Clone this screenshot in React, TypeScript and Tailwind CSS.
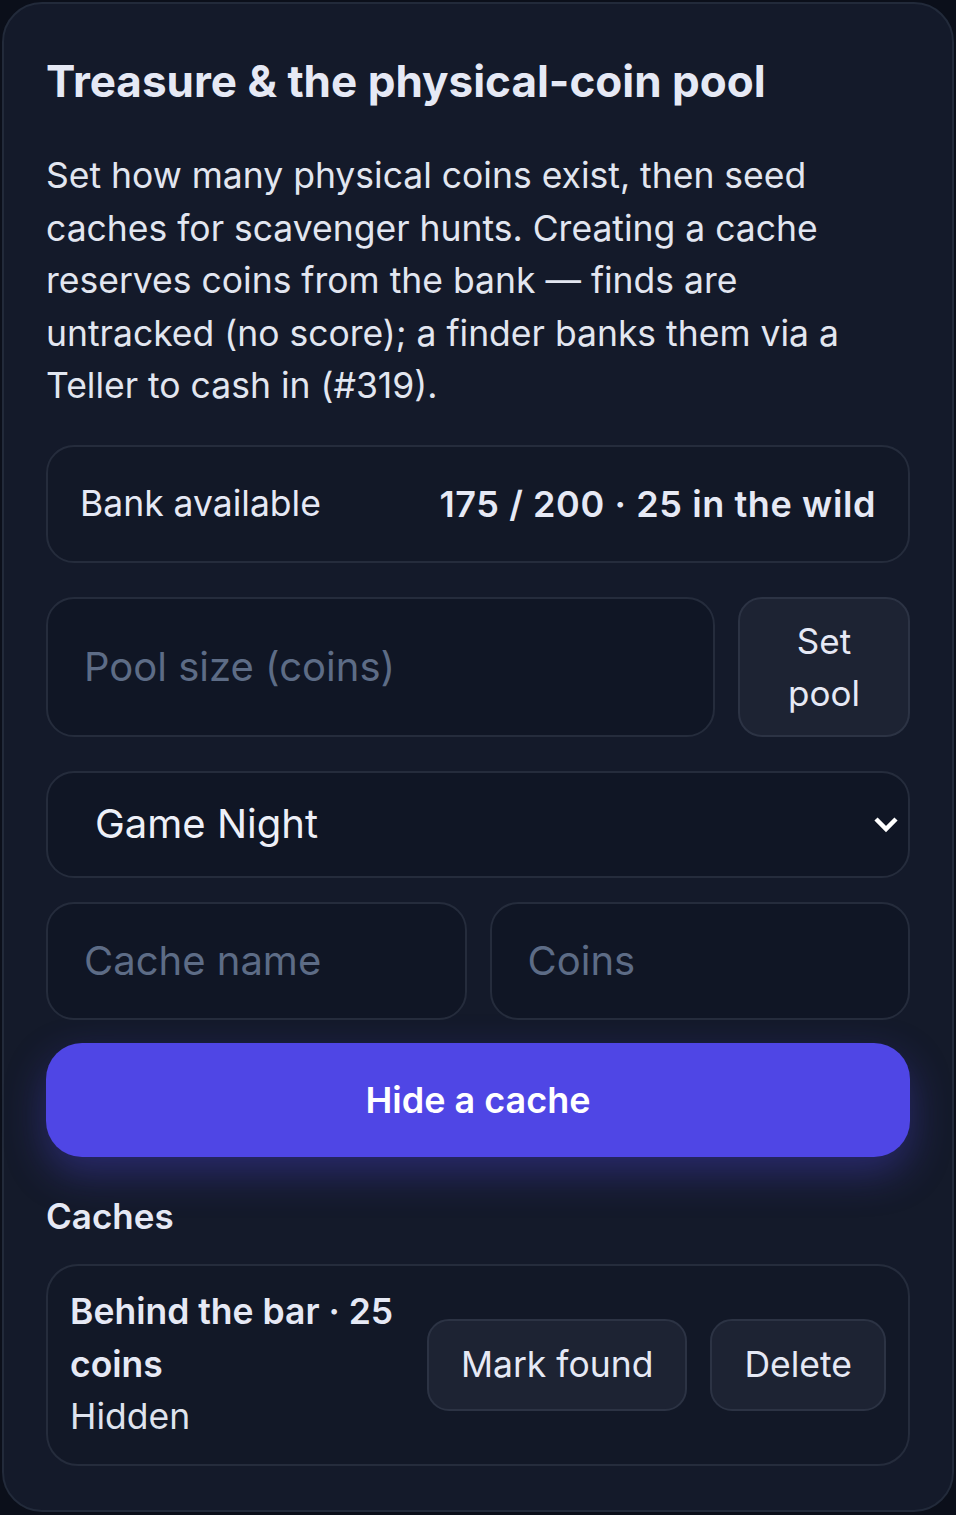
import React from "react";

export default function App() {
  return (
    <div
      className="min-h-[1515px] w-full bg-[#0b0f1a] p-[2px] text-slate-200"
      style={{ fontFamily: "Inter, 'Noto Sans', sans-serif" }}
    >
      <div className="rounded-[40px] border-2 border-[#222a3a] bg-[#141a2a] px-[42px] pt-[47px] pb-[44px]">
        <h1 className="text-[44px] font-bold leading-[60px] text-[#e6e9f5]">
          Treasure &amp; the physical-coin pool
        </h1>
        <p className="mt-[39px] text-[35.5px] leading-[52.5px] text-[#e2e6f0]">
          Set how many physical coins exist, then seed caches for scavenger hunts. Creating a cache
          reserves coins from the bank — finds are untracked (no score); a finder banks them via a
          Teller to cash in (#319).
        </p>

        <div className="mt-[32px] flex items-center justify-between rounded-[28px] border-2 border-[#252c3c] bg-[#121827] px-[32px] py-[31px] leading-[52px]">
          <span className="text-[35.5px] text-[#e6e9f5]">Bank available</span>
          <span className="text-[36px] font-semibold tracking-[0.6px] text-[#e6e9f5]">
            175 / 200 · 25 in the wild
          </span>
        </div>

        <div className="mt-[34px] flex gap-[23px]">
          <input
            className="min-w-0 flex-1 rounded-[28px] border-2 border-[#252c3c] bg-[#101625] px-[36px] text-[40px] text-slate-200 outline-none placeholder:text-[#5d6c86]"
            placeholder="Pool size (coins)"
          />
          <button className="w-[172px] rounded-[24px] border-2 border-[#2c3344] bg-[#1d2333] px-[30px] py-[16px] text-[35px] leading-[52px] text-[#e6e9f5]">
            Set pool
          </button>
        </div>

        <div className="mt-[34px] flex h-[107px] items-center justify-between rounded-[28px] border-2 border-[#252c3c] bg-[#101625] pl-[47px] pr-[10px]">
          <span className="text-[40px] text-[#eef0f8]">Game Night</span>
          <svg width="28" height="20" viewBox="0 0 28 20" className="mr-[-2px]">
            <polyline
              points="4,5 14,15 24,5"
              fill="none"
              stroke="#ffffff"
              strokeWidth="4.5"
              strokeLinecap="butt"
              strokeLinejoin="miter"
            />
          </svg>
        </div>

        <div className="mt-[24px] flex gap-[23px]">
          <input
            className="h-[118px] min-w-0 flex-1 rounded-[28px] border-2 border-[#252c3c] bg-[#101625] px-[36px] text-[40px] text-slate-200 outline-none placeholder:text-[#5d6c86]"
            placeholder="Cache name"
          />
          <input
            className="h-[118px] min-w-0 flex-1 rounded-[28px] border-2 border-[#252c3c] bg-[#101625] px-[36px] text-[40px] text-slate-200 outline-none placeholder:text-[#5d6c86]"
            placeholder="Coins"
          />
        </div>

        <button className="mt-[23px] flex h-[114px] w-full items-center justify-center rounded-[36px] bg-[#4f46e5] text-[36px] font-semibold text-white shadow-[0_16px_40px_rgba(79,70,229,0.36)]">
          Hide a cache
        </button>

        <div className="mt-[35px] text-[35px] font-semibold leading-[48px] text-[#e6e9f5]">Caches</div>

        <div className="mt-[24px] flex items-center gap-[23px] rounded-[32px] border-2 border-[#252c3c] bg-[#121827] px-[22px] py-[20.5px]">
          <div className="min-w-0 flex-1 leading-[52.5px]">
            <div className="text-[35.5px] font-semibold text-[#e6e9f5]">
              Behind the bar · 25 coins
            </div>
            <div className="text-[35.5px] text-[#dfe3ee]">Hidden</div>
          </div>
          <button className="h-[92px] rounded-[22px] border-2 border-[#2c3344] bg-[#1d2333] px-[32px] text-[35.5px] text-[#e6e9f5]">
            Mark found
          </button>
          <button className="h-[92px] rounded-[22px] border-2 border-[#2c3344] bg-[#1d2333] px-[32px] text-[35.5px] text-[#e6e9f5]">
            Delete
          </button>
        </div>
      </div>
    </div>
  );
}
